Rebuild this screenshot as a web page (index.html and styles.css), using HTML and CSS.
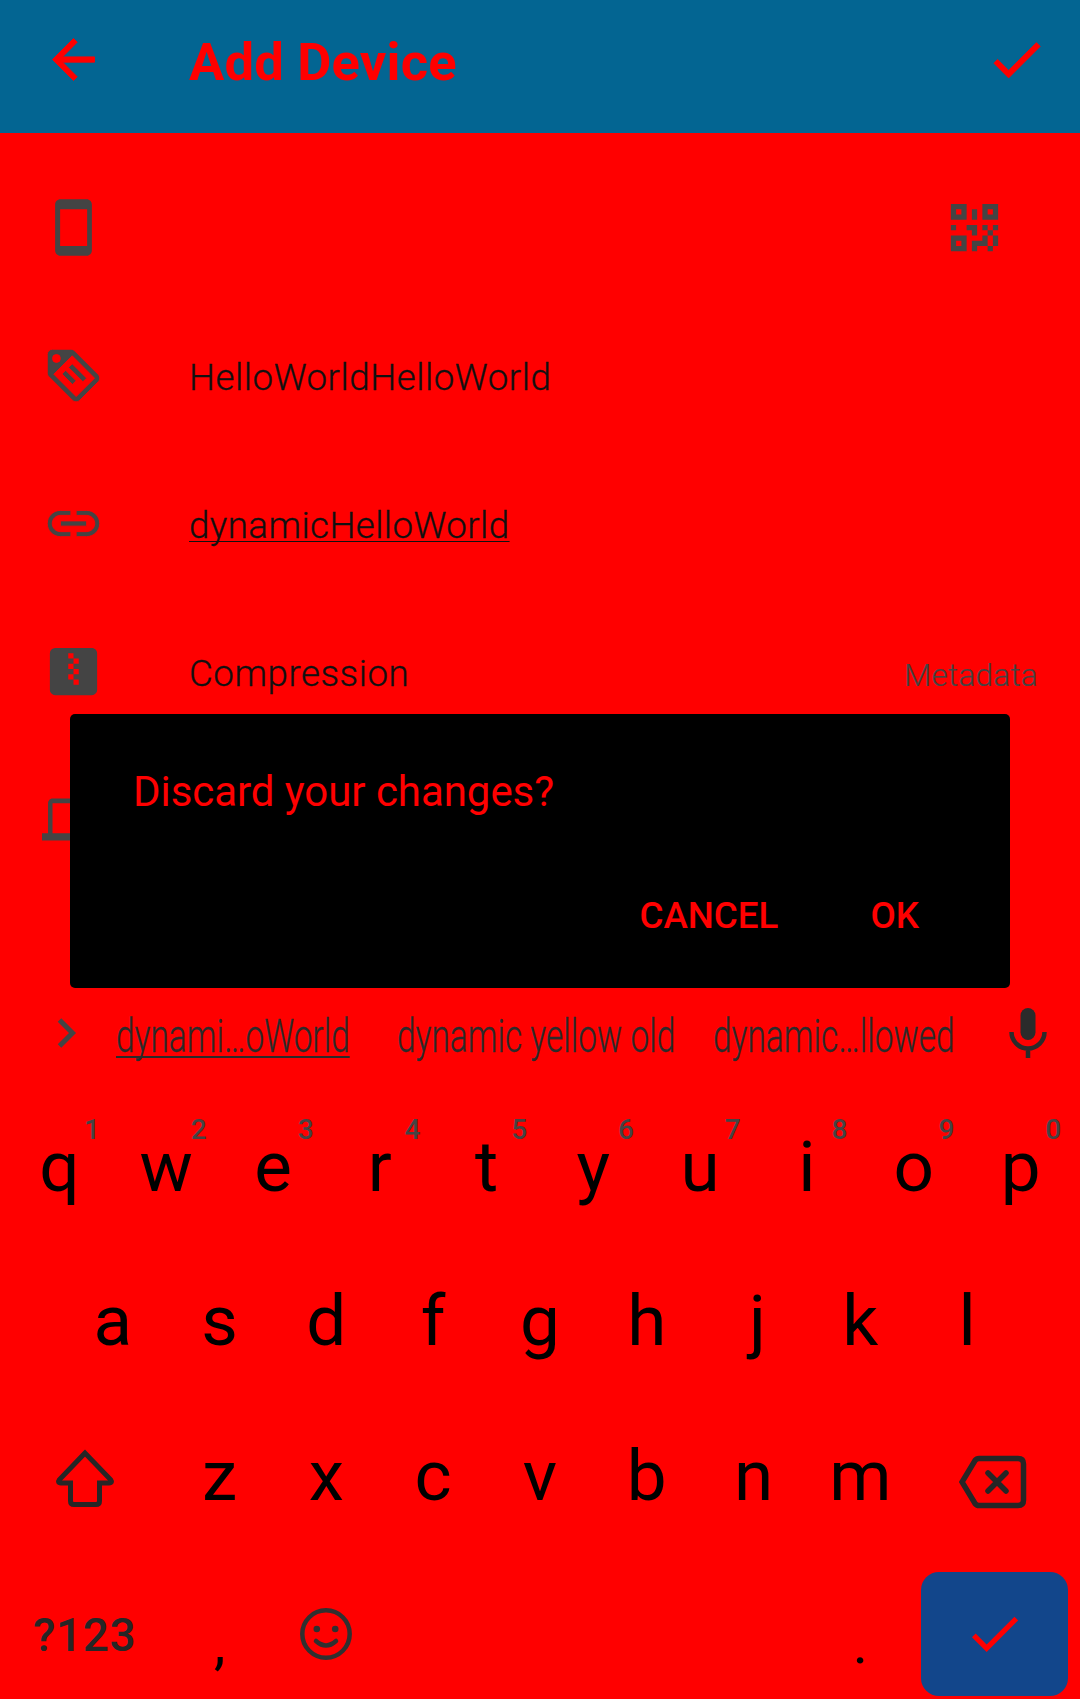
FILE: index.html
```html
<!DOCTYPE html>
<html lang="en">
<head>
<meta charset="utf-8">
<title>Add Device</title>
<link rel="stylesheet" href="styles.css">
</head>
<body>
<div class="screen">
  <header class="appbar">
    <svg class="icon" viewBox="0 0 24 24"><path d="M20 11H7.83l5.59-5.59L12 4l-8 8 8 8 1.41-1.41L7.83 13H20v-2z"/></svg>
    <h1 class="title">Add Device</h1>
    <svg class="icon" viewBox="0 0 24 24"><path d="M9 16.17L4.83 12l-1.42 1.41L9 19 21 7l-1.41-1.41z"/></svg>
  </header>

  <main class="form">
    <div class="row">
      <svg class="icon" viewBox="0 0 24 24"><path d="M17 1.2L7 1.200c-1.1 0-2 .9-2 2v17.600c0 1.1.9 2 2 2h10c1.1 0 2-.9 2-2V3.200c0-1.1-.9-2-2-2zM17.200 19H6.900V5h10.300v14z"/></svg>
      <svg class="icon scan" viewBox="0 0 24 24"><path d="M3,11H5V13H3V11M11,5H13V9H11V5M9,11H13V15H11V13H9V11M15,11H17V13H19V11H21V13H19V15H21V19H19V21H17V19H13V21H11V17H15V15H17V13H15V11M19,19V15H17V19H19M15,3H21V9H15V3M17,5V7H19V5H17M3,3H9V9H3V3M5,5V7H7V5H5M3,15H9V21H3V15M5,17V19H7V17H5Z"/></svg>
    </div>
    <div class="row">
      <svg class="icon thin" viewBox="0 0 24 24"><path d="M5.5,7A1.5,1.5 0 0,0 7,5.5A1.5,1.5 0 0,0 5.5,4A1.5,1.5 0 0,0 4,5.5A1.5,1.5 0 0,0 5.5,7M21.41,11.58C21.77,11.94 22,12.44 22,13C22,13.55 21.78,14.05 21.41,14.41L14.41,21.41C14.05,21.77 13.55,22 13,22C12.45,22 11.95,21.77 11.58,21.41L2.59,12.41C2.22,12.05 2,11.55 2,11V4C2,2.89 2.89,2 4,2H11C11.55,2 12.05,2.22 12.41,2.58L21.41,11.58M13,20L20,13L11.5,4.5L4.5,11.5L13,20M10.09,8.91L11.5,7.5L17,13L15.59,14.41L10.09,8.91M7.59,11.41L9,10L13,14L11.59,15.41L7.59,11.41Z"/></svg>
      <span class="value">HelloWorldHelloWorld</span>
    </div>
    <div class="row">
      <svg class="icon thin" viewBox="0 0 24 24"><path d="M3.9 12c0-1.71 1.39-3.1 3.1-3.1h4V7H7c-2.76 0-5 2.24-5 5s2.24 5 5 5h4v-1.9H7c-1.71 0-3.1-1.39-3.1-3.1zM7 13h10v-2H7v2zm10-6h-4v1.9h4c1.71 0 3.1 1.39 3.1 3.1s-1.39 3.1-3.1 3.1h-4V17h4c2.76 0 5-2.24 5-5s-2.24-5-5-5z"/></svg>
      <span class="value composing">dynamicHelloWorld</span>
    </div>
    <div class="row">
      <svg class="icon" viewBox="0 0 24 24"><path d="M14,17H12V15H10V13H12V15H14M14,9H12V11H14V13H12V11H10V9H12V7H10V5H12V7H14M19,3H5A2,2 0 0,0 3,5V19A2,2 0 0,0 5,21H19A2,2 0 0,0 21,19V5C21,3.89 20.1,3 19,3Z"/></svg>
      <span class="value label">Compression</span>
      <span class="hint">Metadata</span>
    </div>
    <div class="row">
      <svg class="icon" viewBox="0 0 24 24"><path d="M4 4H20C21.1 4 21.8 4.8 21.8 6V17.2H24V20H0V17.2H2.3V6C2.3 4.8 3 4 4 4ZM4 5.8V17.2H20V5.8Z"/></svg>
    </div>
  </main>

  <section class="keyboard">
    <div class="suggestions">
      <svg class="expand" viewBox="0 0 20 32"><path d="M2.5 3L15.500 16 2.500 29"/></svg>
      <div class="suggestion first"><span class="condensed underlined">dynami…oWorld</span></div>
      <div class="suggestion second"><span class="condensed">dynamic yellow old</span></div>
      <div class="suggestion third"><span class="condensed">dynamic…llowed</span></div>
      <svg class="mic" viewBox="0 0 38 52"><rect x="11.500" y="1" width="15" height="32" rx="7.500"/><path d="M2.500 25a16.500 16.500 0 0 0 33 0M19 42v9"/></svg>
    </div>
    <div class="keys">
      <div class="key">q<sup>1</sup></div><div class="key">w<sup>2</sup></div><div class="key">e<sup>3</sup></div><div class="key">r<sup>4</sup></div><div class="key">t<sup>5</sup></div><div class="key">y<sup>6</sup></div><div class="key">u<sup>7</sup></div><div class="key">i<sup>8</sup></div><div class="key">o<sup>9</sup></div><div class="key">p<sup>0</sup></div>
    </div>
    <div class="keys inset">
      <div class="key">a</div><div class="key">s</div><div class="key">d</div><div class="key">f</div><div class="key">g</div><div class="key">h</div><div class="key hooked">j</div><div class="key">k</div><div class="key">l</div>
    </div>
    <div class="keys">
      <div class="key wide"><svg class="shift" viewBox="0 0 60 60"><path d="M30 4L4.500 30.500Q2 34 6 34H15.500V52Q15.500 55.500 19 55.500H41Q44.500 55.500 44.500 52V34H54Q58 34 55.500 30.500Z"/></svg></div>
      <div class="key">z</div><div class="key">x</div><div class="key">c</div><div class="key">v</div><div class="key">b</div><div class="key">n</div><div class="key">m</div>
      <div class="key wide"><svg class="erase" viewBox="0 0 68 54"><path d="M20 3.500H59Q64.500 3.500 64.500 9V45Q64.500 50.500 59 50.500H20Q17.500 50.500 16 48.500L3 27 16 5.500Q17.500 3.500 20 3.500ZM29 18L47 36M47 18L29 36"/></svg></div>
    </div>
    <div class="keys bottom">
      <div class="key wide symbols">?123</div>
      <div class="key punct">,</div>
      <div class="key"><svg class="emoji" viewBox="0 0 54 54"><circle cx="27" cy="27" r="23.700"/><path d="M17 34Q27 43 37 34"/><circle class="eye" cx="17.800" cy="22" r="3.300"/><circle class="eye" cx="36.200" cy="22" r="3.300"/></svg></div>
      <div class="space"></div>
      <div class="key punct">.</div>
      <div class="key wide"><div class="enter"><svg class="icon" viewBox="0 0 24 24"><path d="M9 16.17L4.83 12l-1.42 1.41L9 19 21 7l-1.41-1.41z"/></svg></div></div>
    </div>
  </section>

  <div class="dialog" role="dialog">
    <p class="message">Discard your changes?</p>
    <div class="actions"><span class="cancel">CANCEL</span><span class="ok">OK</span></div>
  </div>
</div>
</body>
</html>
```
FILE: styles.css
```css
* { box-sizing: border-box; }
body { margin: 0; background: #f00; font-family: Roboto, "Liberation Sans", sans-serif; }
.screen { position: relative; width: 1080px; height: 1699px; overflow: hidden; display: flex; flex-direction: column; }
.icon { width: 63px; height: 63px; flex: none; fill: currentColor; display: block; }
.thin { stroke: #f00; stroke-width: .35; }

.appbar { height: 133px; background: #036592; color: #f00; display: flex; align-items: flex-start; padding: 28px 32px 0 42px; }
.appbar .icon { stroke: currentColor; stroke-width: .35; }
.title { margin: 3px auto 0 84px; font-size: 52.5px; line-height: 62px; font-weight: 700; letter-spacing: .2px; white-space: nowrap; }

.form { padding-top: 20px; }
.row { height: 148px; display: flex; align-items: center; padding: 0 42px; color: #444; }
.scan { margin: 0 32px 0 auto; }
.value { margin-left: 84px; padding-top: 6px; font-size: 36.75px; line-height: 44px; font-weight: 300; letter-spacing: .5px; color: #111; white-space: nowrap; -webkit-text-stroke: .3px #111; }
.composing { letter-spacing: .4px; text-decoration: underline; text-decoration-thickness: 1px; text-underline-offset: 3px; text-decoration-skip-ink: none; }
.hint { margin-left: auto; padding-top: 9px; font-size: 31.5px; line-height: 38px; font-weight: 300; letter-spacing: .25px; -webkit-text-stroke: .2px #444; }

.keyboard { margin-top: auto; height: 711px; flex: none; }
.suggestions { height: 102px; display: flex; align-items: center; padding: 0 33px 7px 57px; color: #2b2b2b; }
.expand { width: 20px; height: 32px; margin-bottom: 5px; fill: none; stroke: #444; stroke-width: 5; }
.suggestion { font-size: 46px; line-height: 56px; font-weight: 300; white-space: nowrap; -webkit-text-stroke: .3px #2b2b2b; }
.first { width: 233px; margin-left: 39px; }
.second { width: 277px; margin-left: 48px; }
.third { width: 240px; margin-left: 39px; }
.condensed { display: inline-block; transform: scaleX(.727); transform-origin: 0 50%; }
.underlined { text-decoration: underline; text-decoration-thickness: 2px; text-underline-offset: 4px; text-decoration-skip-ink: none; }
.mic { width: 38px; height: 52px; margin: 0 0 5px auto; fill: #2b2b2b; }
.mic path { fill: none; stroke: #2b2b2b; stroke-width: 4.5; }

.keys { display: flex; height: 154.5px; padding: 0 6px; }
.inset { padding: 0 59.4px; }
.inset .key { padding-bottom: 2px; }
.key { position: relative; flex: 1 1 0; display: flex; align-items: center; justify-content: center; font-size: 71px; line-height: 84px; color: #000; }
.key sup { position: absolute; left: 76px; top: 23px; width: 20px; font-size: 28px; line-height: 34px; font-weight: 500; color: #444; text-align: center; }
.hooked { text-indent: 8px; }
.wide { flex-grow: 1.5; }
.keys svg { display: block; flex: none; }
.shift { width: 60px; height: 60px; margin: 6px 2px 0 0; fill: none; stroke: #262626; stroke-width: 5; }
.erase { width: 68px; height: 54px; fill: none; stroke: #262626; stroke-width: 5.500; stroke-linecap: round; margin: 11px 1px 0 0; }
.emoji { width: 54px; height: 54px; margin-top: 15px; fill: none; stroke: #303030; stroke-width: 4.500; stroke-linecap: round; }
.emoji .eye { fill: #303030; stroke: none; }
.bottom { height: 145.5px; }
.symbols { font-size: 46px; font-weight: 500; letter-spacing: .6px; text-indent: -3px; color: #262626; padding-top: 18px; }
.punct { font-size: 58px; padding-top: 34px; }
.space { flex: 4 1 0; }
.enter { width: 147px; height: 124px; margin: 16px 0 0 1px; padding-bottom: 2px; border-radius: 18px; background: #12468b; color: #f00; display: flex; align-items: center; justify-content: center; }

.dialog { position: absolute; left: 70px; top: 714px; width: 940px; height: 274px; border-radius: 5px; background: #000; color: #f00; padding: 53px 91px 0 63px; }
.message { margin: 0; font-size: 42px; line-height: 50px; letter-spacing: -.05px; }
.actions { display: flex; justify-content: flex-end; margin-top: 77px; font-size: 36.75px; line-height: 44px; font-weight: 500; }
.ok { margin-left: 92px; }
```
